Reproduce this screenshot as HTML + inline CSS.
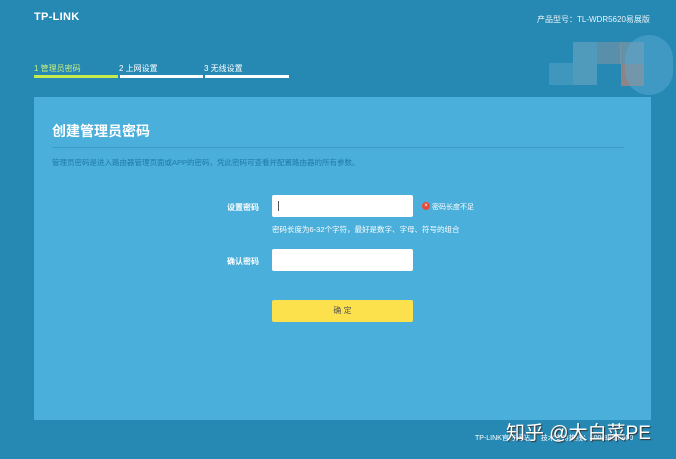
<!DOCTYPE html>
<html><head><meta charset="utf-8"><style>
*{margin:0;padding:0;box-sizing:border-box}
body{width:676px;height:459px;background:#2689b4;font-family:"Liberation Sans","Noto Sans CJK SC",sans-serif;position:relative;overflow:hidden;color:#fff}
.abs{position:absolute}
.logo{left:34px;top:11px;font-size:11px;font-weight:bold;letter-spacing:0.3px}
.model{left:537px;top:14px;font-size:8px;color:#e8f3f8}
.step{top:63px;font-size:8px}
.bar{top:75px;height:3px}
.panel{left:34px;top:97px;width:617px;height:323px;background:#4aafda}
.title{left:52px;top:121px;font-size:14px;font-weight:bold}
.line{left:52px;top:147px;width:572px;height:1px;background:#3a9cc6}
.desc{left:52px;top:157px;font-size:7.5px;color:#1f7aa5}
.lbl{font-size:8px;font-weight:bold;left:227px}
.inp{left:272px;width:141px;height:22px;background:#fff;border-radius:2px}
.btn{left:272px;top:300px;width:141px;height:22px;background:#fde14c;border-radius:2px;color:#555;font-size:8px;text-align:center;line-height:22px}
</style></head><body>
<div class="abs logo">TP-LINK</div>
<div class="abs model">产品型号：TL-WDR5620易展版</div>
<div class="abs step" style="left:34px;color:#c8f07a">1 管理员密码</div>
<div class="abs step" style="left:119px">2 上网设置</div>
<div class="abs step" style="left:204px">3 无线设置</div>
<div class="abs bar" style="left:34px;width:84px;background:#c5ea4c"></div>
<div class="abs bar" style="left:120px;width:83px;background:#fff"></div>
<div class="abs bar" style="left:205px;width:84px;background:#fff"></div>
<div class="abs" style="left:549px;top:63px;width:24px;height:22px;background:rgba(255,255,255,0.12)"></div>
<div class="abs" style="left:573px;top:42px;width:24px;height:43px;background:rgba(160,190,200,0.35)"></div>
<div class="abs" style="left:597px;top:42px;width:24px;height:22px;background:rgba(140,150,160,0.5)"></div>
<div class="abs" style="left:620px;top:42px;width:24px;height:22px;background:rgba(140,150,160,0.6)"></div>
<div class="abs" style="left:621px;top:64px;width:23px;height:22px;background:#8f8385"></div>
<div class="abs" style="left:625px;top:35px;width:48px;height:60px;border-radius:30px;background:rgba(90,170,210,0.5)"></div>
<div class="abs panel"></div>
<div class="abs title">创建管理员密码</div>
<div class="abs line"></div>
<div class="abs desc">管理员密码是进入路由器管理页面或APP的密码，凭此密码可查看并配置路由器的所有参数。</div>
<div class="abs lbl" style="top:202px">设置密码</div>
<div class="abs inp" style="top:195px"></div>
<div class="abs" style="left:278px;top:201px;width:1px;height:10px;background:#555"></div>
<div class="abs" style="left:422px;top:202px;width:8px;height:8px;border-radius:50%;background:#e84a3b;font-size:6px;line-height:8px;text-align:center;color:#fff">×</div>
<div class="abs" style="left:432px;top:202px;font-size:7px">密码长度不足</div>
<div class="abs" style="left:272px;top:224px;font-size:7.5px">密码长度为6-32个字符，最好是数字、字母、符号的组合</div>
<div class="abs lbl" style="top:256px">确认密码</div>
<div class="abs inp" style="top:249px"></div>
<div class="abs btn">确 定</div>
<div class="abs" style="left:475px;top:433px;font-size:7px">TP-LINK官方网站 ｜ 技术支持热线：400-8863-400</div>
<div class="abs" style="left:506px;top:418px;font-size:19px;color:#fff;text-shadow:1px 1px 1px #333">知乎 @大白菜PE</div>
</body></html>
